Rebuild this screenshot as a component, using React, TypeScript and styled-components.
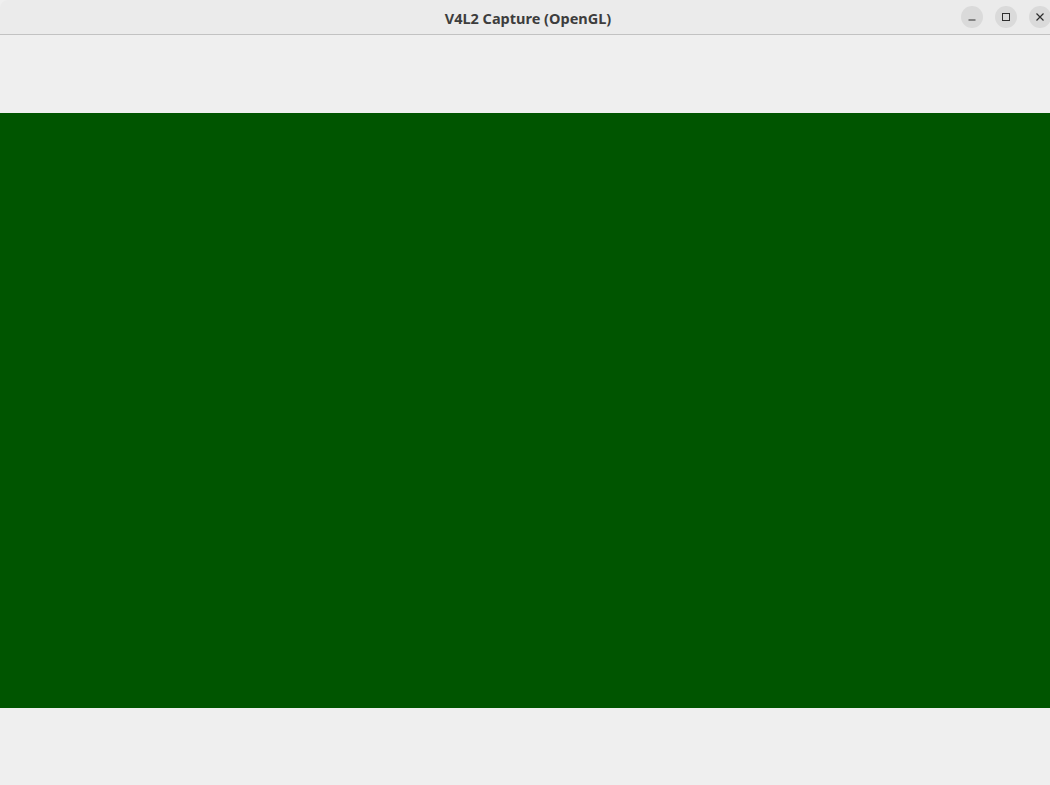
import styled, { createGlobalStyle } from 'styled-components';

const GlobalStyle = createGlobalStyle`
  html, body {
    margin: 0;
    padding: 0;
    background: #efefef;
  }
  #root {
    height: 785px;
  }
`;

const Window = styled.div`
  width: 1050px;
  height: 785px;
  display: flex;
  flex-direction: column;
  background: #efefef;
  border-top-left-radius: 8px;
  overflow: hidden;
`;

const TitleBar = styled.div`
  height: 34px;
  flex-shrink: 0;
  display: grid;
  grid-template-columns: 1fr auto 1fr;
  align-items: center;
  background: #ebebeb;
  border-bottom: 1px solid #c2c2c2;
`;

const Title = styled.div`
  grid-column: 2;
  margin-left: 6px;
  font-family: 'Noto Sans', 'DejaVu Sans', sans-serif;
  font-weight: bold;
  font-size: 14.5px;
  color: #3d3d3d;
  padding-top: 1px;
`;

const Controls = styled.div`
  grid-column: 3;
  justify-self: end;
  display: flex;
  gap: 12px;
  margin-right: -1px;
`;

const ControlButton = styled.div`
  width: 22px;
  height: 22px;
  border-radius: 50%;
  background: #dadada;
  display: flex;
  align-items: center;
  justify-content: center;
  color: #2e2e2e;
`;

const Spacer = styled.div<{ $height: number }>`
  height: ${(p) => p.$height}px;
  flex-shrink: 0;
`;

const Viewport = styled.div`
  height: 595px;
  flex-shrink: 0;
  background: #005500;
`;

export default function App() {
  return (
    <>
      <GlobalStyle />
      <Window>
        <TitleBar>
          <Title>V4L2 Capture (OpenGL)</Title>
          <Controls>
            <ControlButton>
              <svg width='10' height='10' viewBox='0 0 10 10'>
                <line x1='1.5' y1='8' x2='8.5' y2='8' stroke='currentColor' strokeWidth='1' />
              </svg>
            </ControlButton>
            <ControlButton>
              <svg width='10' height='10' viewBox='0 0 10 10'>
                <rect x='1.5' y='1.5' width='7' height='7' fill='none' stroke='currentColor' strokeWidth='1' />
              </svg>
            </ControlButton>
            <ControlButton>
              <svg width='10' height='10' viewBox='0 0 10 10'>
                <path d='M1.5 1.5 L8.5 8.5 M8.5 1.5 L1.5 8.5' stroke='currentColor' strokeWidth='1.2' />
              </svg>
            </ControlButton>
          </Controls>
        </TitleBar>
        <Spacer $height={78} />
        <Viewport />
      </Window>
    </>
  );
}
